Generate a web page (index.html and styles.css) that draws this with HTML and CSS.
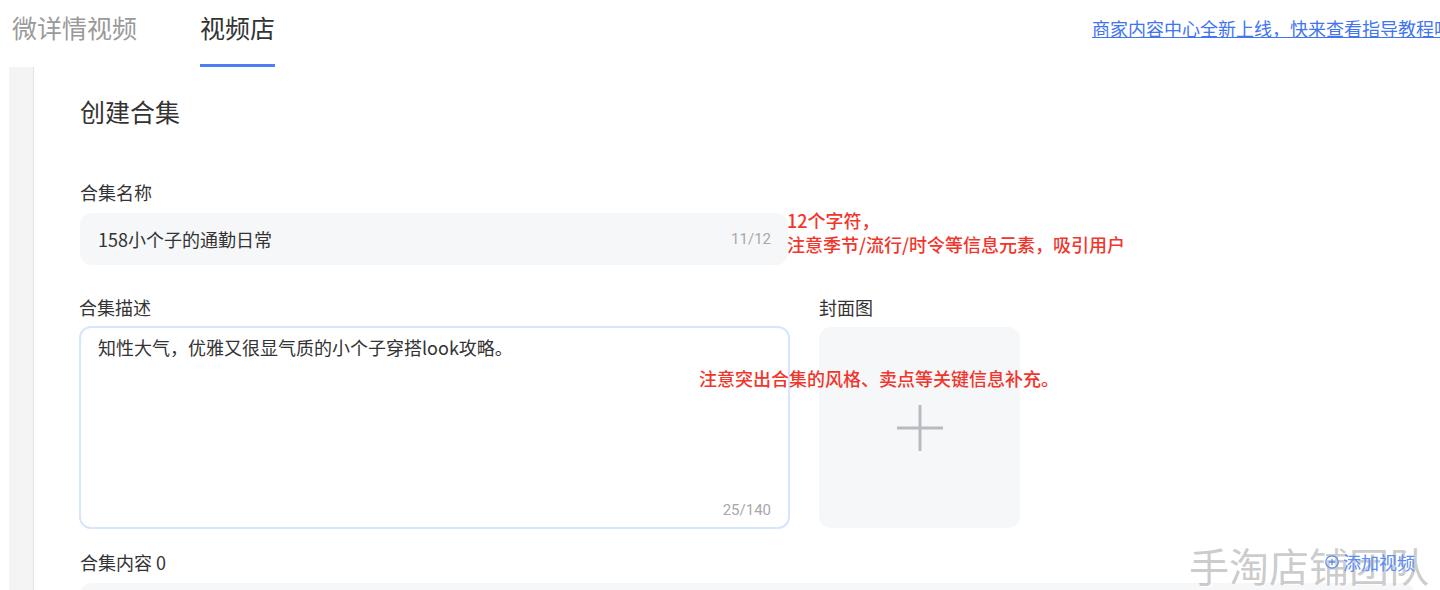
FILE: index.html
```html
<!DOCTYPE html>
<html lang="zh">
<head>
<meta charset="utf-8">
<title>创建合集</title>
<link rel="stylesheet" href="styles.css">
</head>
<body>
<div class="page">
  <header class="header">
    <nav class="tabs">
      <div class="tab">微详情视频</div>
      <div class="tab tab-active">视频店</div>
    </nav>
    <div class="notice"><a href="#" class="notice-link">商家内容中心全新上线，快来查看指导教程吧</a></div>
  </header>
  <main class="main">
    <aside class="strip"></aside>
    <section class="content">
      <h1 class="title">创建合集</h1>
      <div class="label label-first">合集名称</div>
      <div class="input">
        <span class="input-text">158小个子的通勤日常</span>
        <span class="counter">11/12</span>
      </div>
      <div class="row">
        <div class="col-desc">
          <div class="label">合集描述</div>
          <div class="textarea">
            <div class="textarea-text">知性大气，优雅又很显气质的小个子穿搭look攻略。</div>
            <div class="counter">25/140</div>
          </div>
        </div>
        <div class="col-cover">
          <div class="label">封面图</div>
          <div class="cover">
            <svg class="plus" width="48" height="48" viewBox="0 0 48 48" aria-hidden="true">
              <path d="M24 1v46M1 24h46" stroke="#b9bbc0" stroke-width="3" fill="none"/>
            </svg>
          </div>
        </div>
      </div>
      <div class="content-head">
        <div class="label">合集内容 0</div>
        <a href="#" class="add-link">
          <svg width="14" height="14" viewBox="0 0 14 14" aria-hidden="true">
            <circle cx="7" cy="7" r="6.2" stroke="#5b8cf7" stroke-width="1.3" fill="none"/>
            <path d="M7 3.8v6.4M3.8 7h6.4" stroke="#5b8cf7" stroke-width="1.3"/>
          </svg>
          <span>添加视频</span>
        </a>
      </div>
      <div class="list-box"></div>
    </section>
  </main>
  <div class="note note-name">12个字符，<br>注意季节/流行/时令等信息元素，吸引用户</div>
  <div class="note note-desc">注意突出合集的风格、卖点等关键信息补充。</div>
  <div class="watermark">手淘店铺团队</div>
</div>
</body>
</html>
```

FILE: styles.css
```css
html, body {
  margin: 0;
  padding: 0;
  background: #ffffff;
}
body {
  font-family: "Noto Sans CJK SC", "Noto Sans", sans-serif;
  color: #333333;
}
.page {
  position: relative;
  width: 1440px;
  height: 590px;
  overflow: hidden;
}
.header {
  display: flex;
  height: 67px;
}
.tabs {
  display: flex;
  gap: 63px;
  padding-left: 12px;
}
.tab {
  box-sizing: border-box;
  height: 67px;
  padding-top: 10px;
  font-size: 25px;
  line-height: 34px;
  color: #9a9a9a;
  border-bottom: 3px solid transparent;
}
.tab-active {
  color: #333333;
  border-bottom-color: #4e7ef6;
}
.notice {
  flex: 0 0 348px;
  margin-left: auto;
  overflow: hidden;
  white-space: nowrap;
  padding-top: 16px;
}
.notice-link {
  font-size: 18px;
  line-height: 24px;
  color: #3f74f2;
  text-decoration: underline;
}
.main {
  display: flex;
  height: 523px;
}
.strip {
  margin-left: 9px;
  width: 24px;
  background: #f4f4f4;
  border-right: 1px solid #e4e4e4;
}
.content {
  flex: 1;
  padding-left: 46px;
  padding-right: 25px;
}
.title {
  margin: 27px 0 0;
  font-size: 25px;
  line-height: 34px;
  font-weight: 400;
  color: #333333;
}
.label {
  font-size: 18px;
  line-height: 26px;
  color: #333333;
}
.label-first {
  margin-top: 51px;
}
.input {
  box-sizing: border-box;
  margin-top: 8px;
  width: 708px;
  height: 52px;
  background: #f6f7f9;
  border-radius: 12px;
  display: flex;
  align-items: center;
  justify-content: space-between;
  padding: 0 17px 0 18px;
}
.input-text {
  font-size: 18px;
  color: #333333;
}
.counter {
  font-size: 15px;
  color: #a8a8a8;
  font-family: "Roboto", "Noto Sans", sans-serif;
}
.row {
  display: flex;
  gap: 29px;
  margin-top: 29px;
}
.col-desc {
  width: 711px;
  margin-left: -1px;
}
.textarea {
  box-sizing: border-box;
  margin-top: 6px;
  height: 203px;
  border: 2px solid #d6e6fc;
  border-radius: 12px;
  padding: 5px 17px 6px 17px;
  display: flex;
  flex-direction: column;
  justify-content: space-between;
}
.textarea-text {
  font-size: 18px;
  line-height: 28px;
  color: #333333;
}
.textarea .counter {
  align-self: flex-end;
  line-height: 22px;
}
.col-cover {
  width: 201px;
}
.cover {
  margin-top: 7px;
  height: 201px;
  background: #f6f7f9;
  border-radius: 12px;
  display: flex;
  align-items: center;
  justify-content: center;
}
.content-head {
  display: flex;
  justify-content: space-between;
  align-items: center;
  margin-top: 20px;
  position: relative;
  z-index: 2;
}
.add-link {
  display: flex;
  align-items: center;
  gap: 4px;
  font-size: 18px;
  line-height: 26px;
  color: #5b8cf7;
  text-decoration: none;
}
.list-box {
  margin-top: 8px;
  height: 80px;
  background: #f6f7f9;
  border-radius: 12px;
}
.note {
  position: absolute;
  font-size: 18px;
  line-height: 24px;
  color: #f2352b;
  font-weight: 500;
  white-space: nowrap;
}
.note-name {
  left: 787px;
  top: 208px;
}
.note-desc {
  left: 699px;
  top: 366px;
}
.watermark {
  position: absolute;
  z-index: 1;
  left: 1189px;
  top: 541px;
  font-size: 40px;
  line-height: 48px;
  color: rgba(160, 160, 160, 0.55);
  text-shadow: 1px 1px 0 rgba(255, 255, 255, 0.8);
  white-space: nowrap;
  pointer-events: none;
}
```
